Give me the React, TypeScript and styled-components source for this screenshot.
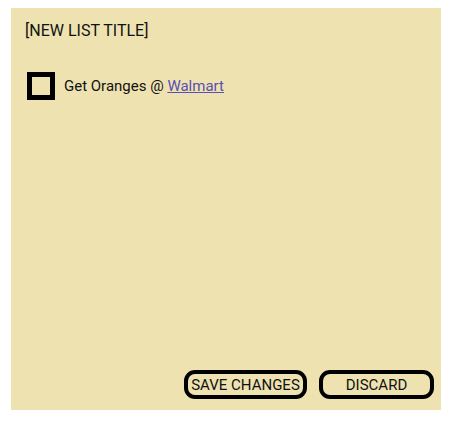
import React from "react";
import styled, { createGlobalStyle } from "styled-components";

const Global = createGlobalStyle`
  html, body { margin: 0; padding: 0; background: #ffffff; }
  body { font-family: "Roboto", "Liberation Sans", sans-serif; }
`;

const Page = styled.div`
  padding: 8px 0 0 11px;
`;

const Panel = styled.div`
  width: 430px;
  height: 402px;
  background: #eee3b0;
  box-sizing: border-box;
  display: flex;
  flex-direction: column;
  padding: 13px 7px 11px 14px;
`;

const Title = styled.div`
  font-size: 16px;
  color: #111;
  line-height: 20px;
`;

const Item = styled.div`
  display: flex;
  align-items: center;
  gap: 9px;
  margin-top: 31px;
  margin-left: 2px;
`;

const Box = styled.span`
  width: 28px;
  height: 28px;
  box-sizing: border-box;
  border: 5px solid #000;
  flex: none;
`;

const ItemText = styled.span`
  font-size: 15px;
  color: #111;
`;

const Link = styled.a`
  color: #5a4fb5;
  text-decoration: underline;
`;

const Actions = styled.div`
  margin-top: auto;
  display: flex;
  justify-content: flex-end;
  gap: 12px;
`;

const Button = styled.button<{ $w: number }>`
  width: ${(p) => p.$w}px;
  height: 29px;
  box-sizing: border-box;
  border: 4px solid #000;
  border-radius: 11px;
  background: transparent;
  font-family: inherit;
  font-size: 15px;
  color: #111;
  padding: 0;
  cursor: pointer;
`;

export default function App() {
  return (
    <Page>
      <Global />
      <Panel>
        <Title>[NEW LIST TITLE]</Title>
        <Item>
          <Box />
          <ItemText>
            Get Oranges @ <Link href="#">Walmart</Link>
          </ItemText>
        </Item>
        <Actions>
          <Button $w={123}>SAVE CHANGES</Button>
          <Button $w={115}>DISCARD</Button>
        </Actions>
      </Panel>
    </Page>
  );
}
